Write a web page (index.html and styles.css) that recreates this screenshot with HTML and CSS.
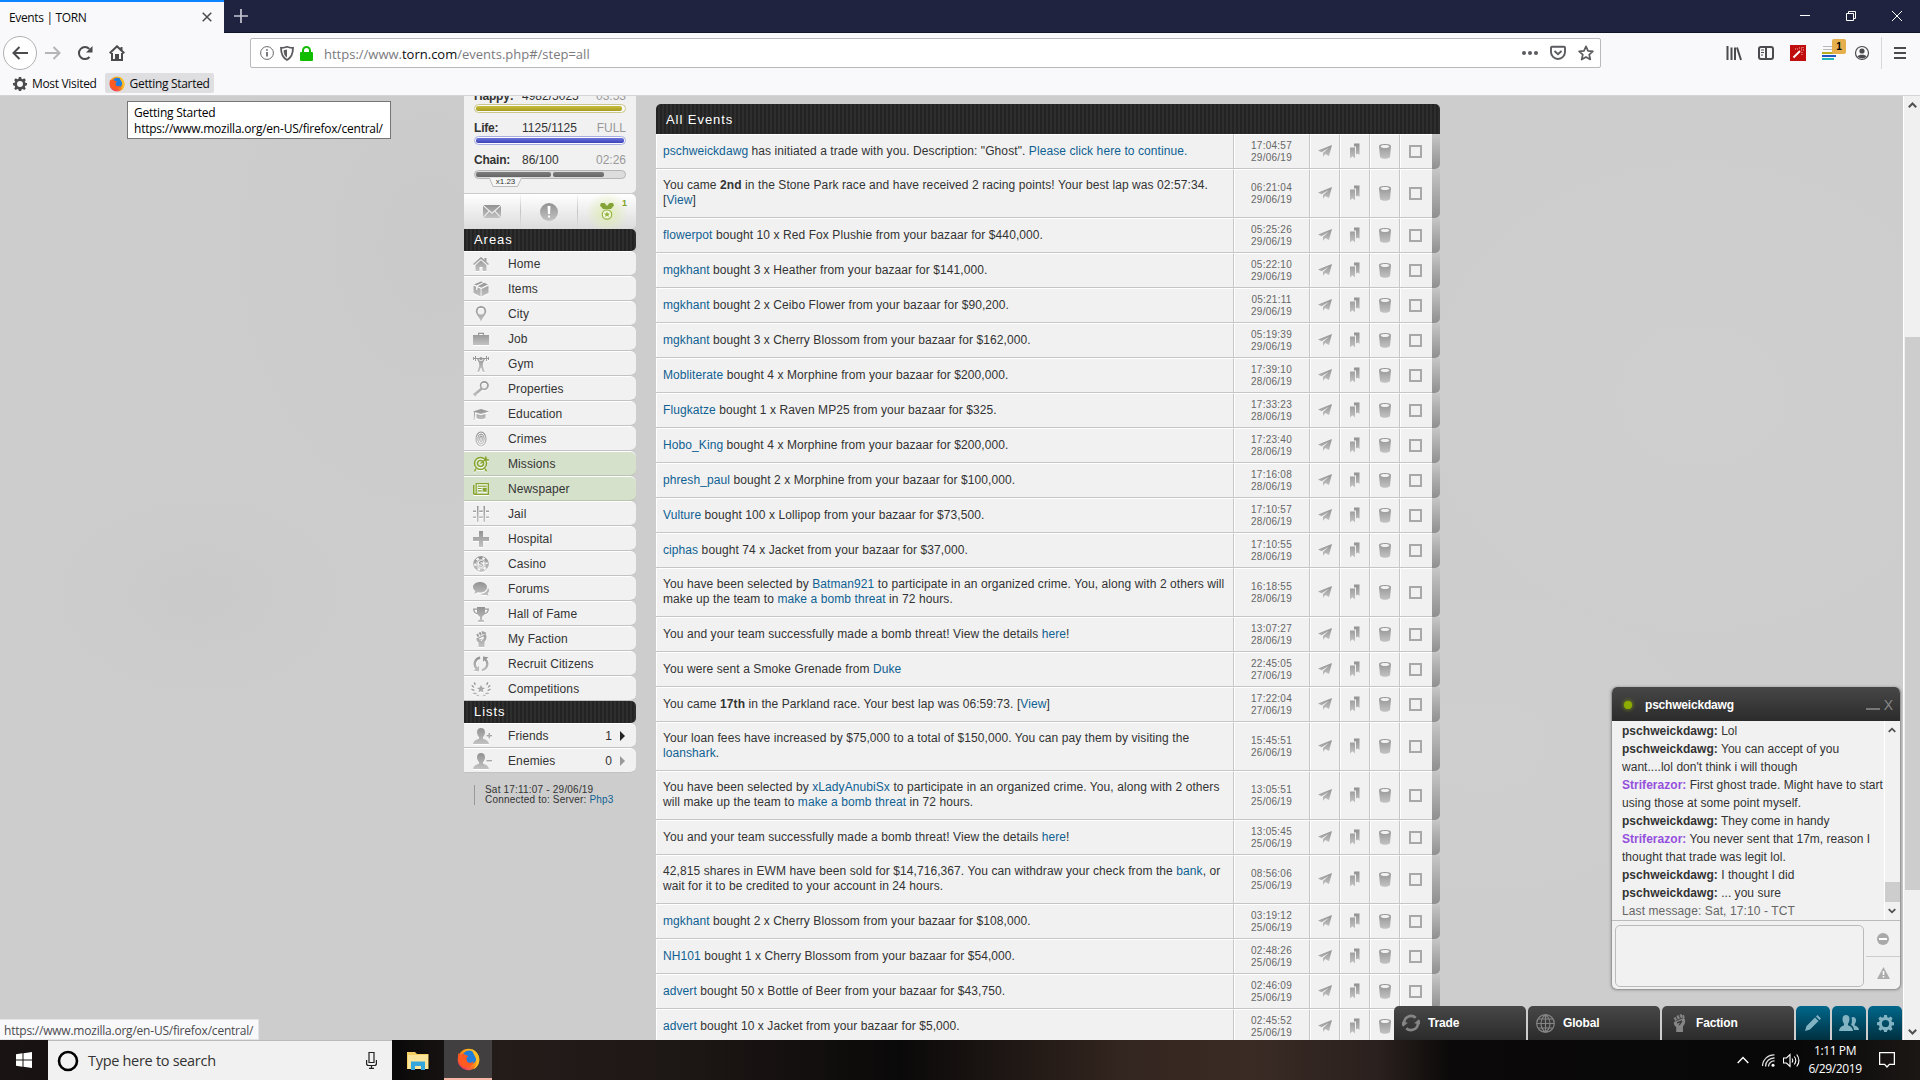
FILE: index.html
```
<!DOCTYPE html>
<html lang="en">
<head>
    <meta charset="UTF-8">
    <title>Events | TORN</title>
    <link rel="stylesheet" href="styles.css">
</head>
<body>
<svg class="defs" width="0" height="0">
    <defs>
        <linearGradient id="gray" x1="0" y1="0" x2="0" y2="1"><stop offset="0" stop-color="#929292"/><stop offset="1" stop-color="#c3c3c3"/></linearGradient>
        <linearGradient id="fox" x1="1" y1="0" x2="0" y2="1"><stop offset="0" stop-color="#ffe226"/><stop offset=".5" stop-color="#ff8a16"/><stop offset="1" stop-color="#e31587"/></linearGradient>
    </defs>
    <symbol id="i-home" viewBox="0 0 16 16"><path d="M8 1L0 8l1 1.200L8 3l7 6.200L16 8l-2.500-2.200V2h-2v2zM8 4.300L2.500 9.200V15h4v-4h3v4h4V9.200z"/></symbol>
    <symbol id="i-items" viewBox="0 0 16 16"><path d="M8 .5L10 1.300 3.500 4.600 1 3.600zM11.200 1.800L15 3.400 8.300 6.800 4.700 5.200zM.5 4.700L3 5.700v3l1.500.6V6.400L7.600 7.700v7.800L.5 12zM15.500 4.700V12l-7 3.500V7.900z"/></symbol>
    <symbol id="i-city" viewBox="0 0 16 16"><path fill-rule="evenodd" d="M8 0a5.200 5.200 0 0 0-5.200 5.200C2.800 9 6.500 11 8 16c1.500-5 5.200-7 5.200-10.800A5.200 5.200 0 0 0 8 0zm0 1.800a3.400 3.400 0 1 1 0 6.800 3.400 3.400 0 0 1 0-6.800z"/></symbol>
    <symbol id="i-job" viewBox="0 0 16 16"><path fill-rule="evenodd" d="M5 4V1.800h6V4h5v10H0V4zm1.200 0h3.600V2.900H6.200z"/></symbol>
    <symbol id="i-gym" viewBox="0 0 16 16"><path d="M0 1h1v1h1V0h1v5H2V3H1v1H0zM13 0h1v2h1V1h1v3h-1V3h-1v2h-1zM3 2h3.500v1H3zM9.500 2H13v1H9.500zM8 1a1.700 1.700 0 1 1 0 3.400A1.700 1.700 0 0 1 8 1zM4 3h1.500L6.800 5h2.400l1.300-2H12l-2 4-.3 3 2 6h-1.800L8 11l-1.900 5H4.300l2-6L6 7z"/></symbol>
    <symbol id="i-properties" viewBox="0 0 16 16"><path fill-rule="evenodd" d="M11.200 0a4.600 4.600 0 1 1-1.800 8.800L3.500 14l-.3 1.500H1.500v-1.300l-1 .2L0 13l7.500-6A4.600 4.600 0 0 1 11.200 0zm0 1.800a2.800 2.800 0 1 0 0 5.600 2.800 2.800 0 0 0 0-5.600z"/></symbol>
    <symbol id="i-education" viewBox="0 0 16 16"><path d="M8 3l8 2.500L8 8 2 6.300v3L1.500 14H.5L1 9V6L0 5.500zM3.500 8L8 9.300 12.500 8v4c-2 1.700-7 1.700-9 0z"/></symbol>
    <symbol id="i-crimes" viewBox="0 0 16 16"><g fill="none" stroke="url(#gray)" stroke-width="1.200"><ellipse cx="8" cy="8" rx="5" ry="7"/><ellipse cx="8" cy="8" rx="3.100" ry="4.900"/><ellipse cx="8" cy="8" rx="1.200" ry="2.800"/></g></symbol>
    <symbol id="i-missions" viewBox="0 0 16 16"><g fill="none" stroke="#85a52e" stroke-width="1.500"><circle cx="7.500" cy="7.500" r="6"/><circle cx="7.500" cy="7.500" r="3"/><path d="M7.500 7.500L14 2.500M12 4l1-3.500M13 4h3M3 12.500L1.500 15.500M12 12.500l1.500 3"/></g></symbol>
    <symbol id="i-newspaper" viewBox="0 0 16 16"><path fill="#85a52e" fill-rule="evenodd" d="M2.500 2H16v12H1.500A1.500 1.500 0 0 1 0 12.500V4h1.500v8.500h1zm1.300 1.300v9.400h10.900V3.300zM5 4.700h8.700v1.100H5zm0 2.300h3.500v1.100H5zm0 2.300h3.500v1.100H5zm4.700-2.500h4v4h-4z"/></symbol>
    <symbol id="i-jail" viewBox="0 0 16 16"><path d="M4 0h1.500v16H4zM10.500 0H12v16h-1.500zM0 4.500h3v1.500H0zM6.200 4.500h3.600v1.500H6.200zM13 4.500h3v1.500h-3zM0 10.500h3v1.500H0zM6.200 10.500h3.600v1.500H6.200zM13 10.500h3v1.500h-3z"/></symbol>
    <symbol id="i-hospital" viewBox="0 0 16 16"><path d="M6 0h4v6h6v4h-6v6H6v-6H0V6h6z"/></symbol>
    <symbol id="i-casino" viewBox="0 0 16 16"><g fill="none" stroke="url(#gray)"><circle cx="8" cy="8" r="7.400" stroke-width=".9"/><circle cx="8" cy="8" r="6.200" stroke-width="2.600" stroke-dasharray="4 2.490"/><circle cx="8" cy="8" r="4.200" stroke-width=".8"/><path stroke-width="1.400" d="M10 6.300C8.500 5 6 6 6.700 7.300s3 .5 2.800 2S7 10.800 5.800 9.600"/></g></symbol>
    <symbol id="i-forums" viewBox="0 0 16 16"><path d="M7 1c4 0 7 2.200 7 5.200s-3 5.300-7 5.300c-.8 0-1.600-.1-2.300-.3L1.500 13l.7-3C.8 9 0 7.700 0 6.200 0 3.200 3 1 7 1zM15 7c1.500 2 1.200 4-.3 5.300l.8 2.700-2.800-1.300c-2 .6-3.900.3-5.200-.7C11.500 12.800 14.500 10.500 15 7z"/></symbol>
    <symbol id="i-hof" viewBox="0 0 16 16"><path fill-rule="evenodd" d="M4 1h8v1.500h4c0 3.500-1.700 5.500-4.500 6L9 11v2.500l2 1V16H5v-1.500l2-1V11L4.500 8.500C1.700 8 0 6 0 2.500h4zM1.500 3.700c.2 1.600 1 2.700 2.500 3.200V3.700zm10.500 0v3.200c1.500-.5 2.300-1.600 2.500-3.200z"/></symbol>
    <symbol id="i-faction" viewBox="0 0 16 16"><path d="M3.200 3.600L5 2.600l1.300 2.700-1.700 1zM5.700 1.700l1.900-.8 1.200 3L7 4.800zM8.500.7L10.300 0l1 3-1.700.7zM11 .9l1.400 0 .7 2.700-1.500.4zM3.500 7.200l8-3.400c1.300 0 2 .7 2 2.200 0 2-.5 3.500-2 5V16h-6v-4.500C4 10.500 3.200 9 3.500 7.200zM6 7.400l.5 1 2.500-.7-1.500 2.300h1.200L11 6.700 10.500 5.600z"/></symbol>
    <symbol id="i-recruit" viewBox="0 0 16 16"><path d="M7 .6L7.300 3A5 5 0 0 0 4.300 11.400L6 10v5.500L.5 14.800l2-1.700A7.500 7.500 0 0 1 7 .6zM9 15.400L8.700 13a5 5 0 0 0 3-8.400L10 6V.5l5.500.7-2 1.700A7.500 7.500 0 0 1 9 15.400z"/></symbol>
    <symbol id="i-competitions" viewBox="0 0 20 16"><path d="M10 4l1.200 2.600 2.800.3-2.100 1.900.6 2.800-2.500-1.400-2.500 1.400.6-2.800L6 6.900l2.800-.3zM3 1c2 1 2 2.500 1.200 3.500C3 3.500 2.500 2.500 3 1zM.5 4c2 .2 3 1.500 2.700 3C1.500 6.600.4 5.500.5 4zM0 8c2-.5 3.500.5 3.700 2C2 10.500.6 9.700 0 8zM1.500 12.300c1.500-1.300 3.500-1 4.500.4-1.500 1.200-3.300 1-4.500-.4zM5 14c1.500-.7 3 0 3.500 1-1.500.8-3 .4-3.500-1zM17 1c-2 1-2 2.500-1.200 3.500C17 3.500 17.500 2.500 17 1zM19.500 4c-2 .2-3 1.500-2.700 3 1.700-.4 2.800-1.500 2.700-3zM20 8c-2-.5-3.500.5-3.700 2 1.700.5 3.100-.3 3.700-2zM18.500 12.300c-1.500-1.300-3.500-1-4.500.4 1.500 1.200 3.300 1 4.500-.4zM15 14c-1.500-.7-3 0-3.500 1 1.500.8 3 .4 3.500-1z"/></symbol>
    <symbol id="i-friends" viewBox="0 0 19 16"><path d="M8 0c2.500 0 4 1.600 4 4.200S10.700 8.500 10 9.300v1.400c2 1 5.500 1.300 6 5.300H0c.5-4 4-4.300 6-5.300V9.300C5.300 8.500 4 6.800 4 4.200S5.500 0 8 0zM15.500 5H17v2h2v1.500h-2v2h-1.500v-2h-2V7h2z"/></symbol>
    <symbol id="i-enemies" viewBox="0 0 19 16"><path d="M8 0c2.500 0 4 1.600 4 4.200S10.700 8.500 10 9.300v1.400c2 1 5.500 1.300 6 5.300H0c.5-4 4-4.300 6-5.300V9.300C5.300 8.500 4 6.800 4 4.200S5.500 0 8 0zM13.500 7H19v1.500h-5.500z"/></symbol>
    <symbol id="i-send" viewBox="0 0 14 12"><path d="M14 0L0 5.500l3.600 1.700L11 2.700 5 8v4l2.200-2.900L11 11z"/></symbol>
    <symbol id="i-save" viewBox="0 0 10 16"><path d="M0 4.500h5V15.500l-2.500-2.300L0 15.500zM4 .5h5.500v11.500L8 10.500 6 11.500V3.500H4z"/></symbol>
    <symbol id="i-trash" viewBox="0 0 12 15"><path fill-rule="evenodd" d="M6 0c3.500 0 6 .9 6 2.200L11 13c-1 2.400-9 2.400-10 0L0 2.200C0 .9 2.500 0 6 0zm0 1C3.500 1 1.500 1.600 1.500 2.400S3.500 3.900 6 3.900s4.500-.7 4.500-1.500S8.500 1 6 1z"/></symbol>
    <symbol id="i-gear" viewBox="0 0 16 16"><path fill-rule="evenodd" d="M6.700 0h2.600l.4 2.100 1.400.6 1.800-1.200 1.800 1.800-1.200 1.800.6 1.400 2.100.4v2.600l-2.100.4-.6 1.400 1.200 1.800-1.800 1.800-1.800-1.200-1.400.6L9.300 16H6.700l-.4-1.700-1.400-.6-1.800 1.200-1.800-1.800 1.200-1.800-.6-1.400L0 9.500V6.900l1.900-.4.6-1.400-1.200-1.800 1.800-1.800 1.800 1.200 1.400-.6zM8 4.600a3.400 3.400 0 1 0 0 6.800 3.400 3.400 0 0 0 0-6.800z"/></symbol>
    <symbol id="i-firefox" viewBox="0 0 16 16"><circle cx="8" cy="8" r="7.500" fill="url(#fox)"/><circle cx="8.500" cy="6.800" r="5" fill="#1f7ddb"/><path fill="#ff5a1f" d="M1 3.500L2.500 4.800 4 3.800 6.500 5l1.500.5L6.500 7l.5 2.500c1.500 1.500 3.500.5 4.500-.3-.5 3-3 4.500-5.800 4.200C2 13.500 0 9 1 3.500z"/><path fill="#ffbd27" d="M10.500.8c3 1.500 5 4.200 5 7.400s-2 5.800-4 6.600c2.300-3 2.300-5.300 1.500-7.800-.5-2-2-3-2.500-6.200z"/></symbol>
</svg>

<div class="titlebar">
    <div class="tab">
        <span>Events | TORN</span>
        <svg width="10" height="10" viewBox="0 0 10 10"><path d="M.7.700l8.600 8.600M9.300.700L.7 9.300" stroke="#4a4a4f" stroke-width="1.500"/></svg>
    </div>
    <svg class="new-tab" width="14" height="14" viewBox="0 0 14 14"><path d="M7 0v14M0 7h14" stroke="#c6c7d2" stroke-width="1.700"/></svg>
    <div class="window-buttons">
        <svg width="10" height="10" viewBox="0 0 10 10"><path d="M0 4.500h10" stroke="#fff"/></svg>
        <svg width="10" height="10" viewBox="0 0 10 10"><path d="M.5 2.500h7v7h-7zM2.500 2.500v-2h7v7h-2" fill="none" stroke="#fff"/></svg>
        <svg width="10" height="10" viewBox="0 0 10 10"><path d="M0 0l10 10M10 0L0 10" stroke="#fff"/></svg>
    </div>
</div>

<div class="toolbar">
    <div class="tool back"><svg width="16" height="14" viewBox="0 0 16 14"><path d="M16 7H1.500M7.500 1l-6 6 6 6"/></svg></div>
    <div class="tool forward"><svg width="16" height="14" viewBox="0 0 16 14"><path d="M0 7h14.500M8.500 1l6 6-6 6"/></svg></div>
    <div class="tool"><svg width="16" height="16" viewBox="0 0 16 16"><path d="M12.500 12A6 6 0 1 1 12.300 3.900"/><path class="solid" d="M15.500 1v6.500H9z"/></svg></div>
    <div class="tool"><svg width="16" height="16" viewBox="0 0 16 16"><path d="M.7 8.300L8 1.300l7.300 7M3 8v7h10V8M12.500 2v3"/><path class="solid" d="M6 9h4v6H6z"/></svg></div>
    <div class="urlbar">
        <svg width="14" height="14" viewBox="0 0 14 14"><circle cx="7" cy="7" r="6.400" fill="none" stroke="#6b6b70"/><path d="M7 6v4.500M7 3.200v1.600" stroke="#5b5b60" stroke-width="1.600"/></svg>
        <svg width="14" height="15" viewBox="0 0 14 15"><path d="M1 1.800Q4.500 2 7 .8q2.500 1.200 6 1c0 6-1.200 9.700-6 12.200C2.200 11.500 1 7.800 1 1.800z" fill="none" stroke="#5b5b60" stroke-width="1.800"/><path d="M7 3.500v8C4.500 10 3.700 8 3.600 4.300z" fill="#5b5b60"/></svg>
        <svg width="13" height="15" viewBox="0 0 13 15"><rect x="0" y="6" width="13" height="9" rx="1" fill="#12bc00"/><path d="M3 7V4.500a3.500 3.500 0 0 1 7 0V7" fill="none" stroke="#12bc00" stroke-width="2"/></svg>
        <span class="url">https://www.<b>torn.com</b>/events.php#/step=all</span>
        <svg class="url-right" width="16" height="16" viewBox="0 0 16 16"><g fill="#5b5b60"><circle cx="2" cy="8" r="2"/><circle cx="8" cy="8" r="2"/><circle cx="14" cy="8" r="2"/></g></svg>
        <svg width="16" height="16" viewBox="0 0 16 16"><path d="M2 1.800h12q1 0 1 1V7A7 7 0 0 1 1 7V2.800q0-1 1-1zM4.500 6L8 9.300 11.500 6" fill="none" stroke="#5b5b60" stroke-width="1.900"/></svg>
        <svg width="16" height="16" viewBox="0 0 16 16"><path d="M8 1.300l2 4.500 4.900.5-3.700 3.300 1.100 4.900L8 12l-4.300 2.500 1.100-4.900L1.100 6.300 6 5.800z" fill="none" stroke="#5b5b60" stroke-width="1.700" stroke-linejoin="round"/></svg>
    </div>
    <div class="tool library"><svg width="16" height="16" viewBox="0 0 16 16"><path d="M1.500 1v14M5.500 2.500V15M9 2.500V15M11 2.500L15 15"/></svg></div>
    <div class="tool"><svg width="16" height="16" viewBox="0 0 16 16"><rect x="1" y="2" width="14" height="12" rx="2"/><path d="M8 2v12"/><path d="M3 5h3M3 7.500h3M3 10h2" stroke-width="1"/></svg></div>
    <div class="tool"><svg width="16" height="16" viewBox="0 0 16 16"><path fill="#c00d0d" stroke="none" d="M0 0h16v16H0z"/><path stroke="#fff" d="M3.500 12.500L10 6"/><path stroke="#f3b8b8" stroke-width="1" stroke-dasharray="1 1" d="M5 4h3M9 3h4M11 5h3M12 7v3M13 2v2"/></svg></div>
    <div class="tool addon"><svg width="16" height="16" viewBox="0 0 16 16"><path stroke="#b9b9b9" stroke-width="1" d="M1 1.500h12M1 4.500h12"/><path stroke="#b9ac1e" d="M0 8h12"/><path stroke="#2456c4" d="M0 11h14"/><path stroke="#22b6b6" d="M0 14h12"/></svg><span class="badge">1</span></div>
    <div class="tool"><svg width="16" height="16" viewBox="0 0 16 16"><circle cx="8" cy="8" r="6.500" stroke-width="1.200"/><circle class="solid" cx="8" cy="6" r="2.600"/><path class="solid" d="M3.500 11.500c1-2.500 8-2.500 9 0-2.500 2.500-6.500 2.500-9 0z"/></svg></div>
    <div class="tool menu"><svg width="12" height="14" viewBox="0 0 12 14"><path d="M0 2h12M0 7h12M0 12h12"/></svg></div>
</div>
<div class="bookmarks">
    <span class="bookmark"><svg width="14" height="14" fill="#4a4a4f"><use href="#i-gear"/></svg>Most Visited</span>
    <span class="bookmark active"><svg width="16" height="16"><use href="#i-firefox"/></svg>Getting Started</span>
</div>

<div class="viewport">
    <div class="content">
        <div class="sidebar">
            <div class="bars">
                <div class="bar-text"><b>Happy:</b><span>4982/5025</span><i>03:53</i></div>
                <div class="bar happy"><div></div></div>
                <div class="bar-text"><b>Life:</b><span>1125/1125</span><i>FULL</i></div>
                <div class="bar life"><div></div></div>
                <div class="bar-text"><b>Chain:</b><span>86/100</span><i>02:26</i></div>
                <div class="bar chain"><div></div><div></div></div>
                <div class="bonus">
                    <svg width="33" height="10" viewBox="0 0 33 10"><path d="M.5 0l3.500 8.500h24.500L32.500 0" fill="#f6f6f6" stroke="#bbb"/></svg>
                    <span>x1.23</span>
                </div>
            </div>
            <div class="notices">
                <div><svg width="18" height="13" viewBox="0 0 18 13" fill="url(#gray)"><path d="M.5 0h17L9 7.500zM0 1l5.500 5L0 12zM18 1l-5.500 5 5.500 6zM6.300 6.800L9 9l2.700-2.200L17.500 13H.5z"/></svg></div>
                <div><svg width="18" height="18" viewBox="0 0 18 18"><circle cx="9" cy="9" r="9" fill="url(#gray)"/><path d="M7.500 3h3L10 11H8zM8 12.500h2v2H8z" fill="#fff"/></svg></div>
                <div class="award"><svg width="14" height="17" viewBox="0 0 14 17"><path d="M1 0h3.500L7 3 9.500 0H13l1 2.500-3 3.500H3L0 2.500z" fill="#84a337"/><circle cx="7" cy="11.500" r="4.700" fill="#f2f6df" stroke="#96b548" stroke-width="1.200"/><path d="M7 8.500l.9 2h2.100l-1.600 1.400.6 2.100-2-1.200-2 1.200.6-2.100L4 10.500h2.100z" fill="#94b440"/></svg><span>1</span></div>
            </div>
            <h2 class="dark-title">Areas</h2>
            <ul id="areas"></ul>
            <h2 class="dark-title">Lists</h2>
            <ul>
                <li><svg width="19" height="16"><use href="#i-friends"/></svg><span>Friends</span><em>1</em><u class="arrow"></u></li>
                <li><svg width="19" height="16"><use href="#i-enemies"/></svg><span>Enemies</span><em>0</em><u class="arrow dim"></u></li>
            </ul>
            <div class="server">Sat 17:11:07 - 29/06/19<br>Connected to: Server: <a>Php3</a></div>
        </div>
        <div class="events">
            <h2 class="dark-title">All Events</h2>
            <div id="events"></div>
        </div>
    </div>
    <div class="scrollbar">
        <svg width="9" height="6" viewBox="0 0 9 6"><path d="M.8 5.200l3.700-3.700 3.700 3.700" fill="none" stroke="#505050" stroke-width="2"/></svg>
        <div class="thumb"></div>
        <svg width="9" height="6" viewBox="0 0 9 6"><path d="M.8.800l3.700 3.700L8.200.800" fill="none" stroke="#505050" stroke-width="2"/></svg>
    </div>

    <div class="chat-box">
        <div class="chat-head"><i></i><span>pschweickdawg</span><u></u><s>X</s></div>
        <div class="chat-body">
            <div class="messages">
                <p><b>pschweickdawg:</b> Lol</p>
                <p><b>pschweickdawg:</b> You can accept of you<br>want....lol don't think i will though</p>
                <p><b class="me">Striferazor:</b> First ghost trade. Might have to start<br>using those at some point myself.</p>
                <p><b>pschweickdawg:</b> They come in handy</p>
                <p><b class="me">Striferazor:</b> You never sent that 17m, reason I<br>thought that trade was legit lol.</p>
                <p><b>pschweickdawg:</b> I thought I did</p>
                <p><b>pschweickdawg:</b> ... you sure</p>
                <p class="last">Last message: Sat, 17:10 - TCT</p>
            </div>
            <div class="chat-scroll">
                <svg width="8" height="6" viewBox="0 0 9 6"><path d="M.8 5.200l3.700-3.700 3.700 3.700" fill="none" stroke="#505050" stroke-width="2"/></svg>
                <div></div>
                <svg width="8" height="6" viewBox="0 0 9 6"><path d="M.8.800l3.700 3.700L8.200.800" fill="none" stroke="#505050" stroke-width="2"/></svg>
            </div>
        </div>
        <div class="chat-foot">
            <div class="chat-input"></div>
            <div class="chat-side">
                <div><svg width="12" height="12" viewBox="0 0 12 12"><circle cx="6" cy="6" r="6" fill="#a9a9a9"/><path d="M2 5h8v2H2z" fill="#fff"/></svg></div>
                <div><svg width="13" height="12" viewBox="0 0 13 12"><path d="M6.500 0L13 12H0z" fill="#adadad"/><path d="M5.700 4h1.600v4H5.700zM5.700 9h1.600v1.500H5.700z" fill="#fff"/></svg></div>
            </div>
        </div>
    </div>
    <div class="chat-tabs">
        <div class="chat-tab"><svg width="18" height="18" viewBox="0 0 16 16"><use href="#i-recruit" transform="rotate(50 8 8)"/></svg>Trade</div>
        <div class="chat-tab"><svg width="19" height="19" viewBox="0 0 19 19"><path d="M9.500.7a8.800 8.800 0 1 0 0 17.600 8.800 8.800 0 0 0 0-17.600zM9.500.7v17.600M.7 9.500h17.600M2 5h15M2 14h15M9.500.7c-6 4.500-6 13 0 17.600M9.500.7c6 4.500 6 13 0 17.600" fill="none" stroke="#858585" stroke-width="1.200"/></svg>Global</div>
        <div class="chat-tab"><svg width="18" height="20"><use href="#i-faction"/></svg>Faction</div>
        <div class="chat-tool"><svg width="16" height="16" viewBox="0 0 16 16"><path d="M11 1.500L12.500 0 16 3.500 14.500 5zM10 2.500L13.500 6 5 14.500 0 16l1.500-5z"/></svg></div>
        <div class="chat-tool"><svg width="20" height="16" viewBox="0 0 20 16"><path d="M7 0c2.300 0 3.500 1.600 3.500 4S9.500 8 9 8.700v1.500c1.500 1 4.500 1.300 5 5.800H0c.5-4.500 3.500-4.800 5-5.800V8.700C4.500 8 3.500 6.400 3.500 4S4.700 0 7 0zM14 2c2 0 3 1.400 3 3.300S16.200 8.500 15.700 9v1.500c1.500.7 3.900 1 4.300 4.500h-5c-.3-2.600-1.200-3.900-3-4.900.8-1.500 1.300-4.500.5-7.600.4-.3.900-.5 1.500-.5z"/></svg></div>
        <div class="chat-tool"><svg width="17" height="17"><use href="#i-gear"/></svg></div>
    </div>
    <div class="status">https://www.mozilla.org/en-US/firefox/central/</div>
    <div class="tooltip">Getting Started<br>https://www.mozilla.org/en-US/firefox/central/</div>
</div>

<div class="taskbar">
    <div class="start"><svg width="16" height="16" viewBox="0 0 16 16"><path d="M0 2.200L6.500 1.300v6.200H0zM7.500 1.200L16 0v7.500H7.500zM0 8.500h6.500v6.200L0 13.800zM7.500 8.500H16V16l-8.500-1.200z" fill="#fff"/></svg></div>
    <div class="search">
        <svg width="22" height="22" viewBox="0 0 22 22"><circle cx="11" cy="11" r="9" fill="none" stroke="#000" stroke-width="2.600"/></svg>
        <span>Type here to search</span>
        <svg width="11" height="17" viewBox="0 0 11 17"><path d="M3 .5h5v10H3zM.6 8v3.500q0 2 2 2h5.800q2 0 2-2V8M5.500 13.500v3M3 16.400h5" fill="none" stroke="#222" stroke-width="1.200"/></svg>
    </div>
    <div class="app"><svg width="22" height="19" viewBox="0 0 22 19"><path d="M0 1h8l2 2h11.500v15H0z" fill="#f6cf62"/><path d="M1 4h20v14H1z" fill="#fbe59a"/><path d="M4 19v-8.500h14V19h-4v-4H8v4z" fill="#35a7dd"/></svg></div>
    <div class="app running"><svg width="23" height="23"><use href="#i-firefox"/></svg></div>
    <div class="tray">
        <svg width="12" height="8" viewBox="0 0 12 8"><path d="M.7 7L6 1.500 11.300 7" fill="none" stroke="#fff" stroke-width="1.400"/></svg>
        <svg class="wifi" width="13" height="13" viewBox="0 0 13 13"><path d="M.5 12A11.500 11.500 0 0 1 12.500.8M3.500 12.500a8.500 8.500 0 0 1 9-8.500M6.500 12.500a5.500 5.500 0 0 1 6-5.500" fill="none" stroke="#ddd" stroke-width="1.300"/><circle cx="11" cy="11.300" r="1.500" fill="#fff"/></svg>
        <svg class="sound" width="17" height="15" viewBox="0 0 17 15"><path d="M.5 5h3L7 1.500v12L3.500 10h-3zM9 5.500q1.500 2 0 4M11.300 3.500q3 4 0 8M13.700 1.500q4.500 6 0 12" fill="none" stroke="#fff" stroke-width="1.100"/></svg>
        <div class="clock">1:11 PM<br>6/29/2019</div>
        <svg width="16" height="16" viewBox="0 0 16 16"><path d="M.6.700h14.800v11.600h-5L8 15l-2.400-2.700h-5z" fill="none" stroke="#fff" stroke-width="1.300"/></svg>
    </div>
</div>

<script>
    const areas = [
        ['home', 'Home'],
        ['items', 'Items'],
        ['city', 'City'],
        ['job', 'Job'],
        ['gym', 'Gym'],
        ['properties', 'Properties'],
        ['education', 'Education'],
        ['crimes', 'Crimes'],
        ['missions', 'Missions', 'highlight'],
        ['newspaper', 'Newspaper', 'highlight'],
        ['jail', 'Jail'],
        ['hospital', 'Hospital'],
        ['casino', 'Casino'],
        ['forums', 'Forums'],
        ['hof', 'Hall of Fame'],
        ['faction', 'My Faction'],
        ['recruit', 'Recruit Citizens'],
        ['competitions', 'Competitions'],
    ];

    const events = [
        ['<a>pschweickdawg</a> has initiated a trade with you. Description: "Ghost". <a>Please click here to continue.</a>', '17:04:57', '29/06/19'],
        ['You came <b>2nd</b> in the Stone Park race and have received 2 racing points! Your best lap was 02:57:34.<br>[<a>View</a>]', '06:21:04', '29/06/19'],
        ['<a>flowerpot</a> bought 10 x Red Fox Plushie from your bazaar for $440,000.', '05:25:26', '29/06/19'],
        ['<a>mgkhant</a> bought 3 x Heather from your bazaar for $141,000.', '05:22:10', '29/06/19'],
        ['<a>mgkhant</a> bought 2 x Ceibo Flower from your bazaar for $90,200.', '05:21:11', '29/06/19'],
        ['<a>mgkhant</a> bought 3 x Cherry Blossom from your bazaar for $162,000.', '05:19:39', '29/06/19'],
        ['<a>Mobliterate</a> bought 4 x Morphine from your bazaar for $200,000.', '17:39:10', '28/06/19'],
        ['<a>Flugkatze</a> bought 1 x Raven MP25 from your bazaar for $325.', '17:33:23', '28/06/19'],
        ['<a>Hobo_King</a> bought 4 x Morphine from your bazaar for $200,000.', '17:23:40', '28/06/19'],
        ['<a>phresh_paul</a> bought 2 x Morphine from your bazaar for $100,000.', '17:16:08', '28/06/19'],
        ['<a>Vulture</a> bought 100 x Lollipop from your bazaar for $73,500.', '17:10:57', '28/06/19'],
        ['<a>ciphas</a> bought 74 x Jacket from your bazaar for $37,000.', '17:10:55', '28/06/19'],
        ['You have been selected by <a>Batman921</a> to participate in an organized crime. You, along with 2 others will<br>make up the team to <a>make a bomb threat</a> in 72 hours.', '16:18:55', '28/06/19'],
        ['You and your team successfully made a bomb threat! View the details <a>here</a>!', '13:07:27', '28/06/19'],
        ['You were sent a Smoke Grenade from <a>Duke</a>', '22:45:05', '27/06/19'],
        ['You came <b>17th</b> in the Parkland race. Your best lap was 06:59:73. [<a>View</a>]', '17:22:04', '27/06/19'],
        ['Your loan fees have increased by $75,000 to a total of $150,000. You can pay them by visiting the<br><a>loanshark</a>.', '15:45:51', '26/06/19'],
        ['You have been selected by <a>xLadyAnubiSx</a> to participate in an organized crime. You, along with 2 others<br>will make up the team to <a>make a bomb threat</a> in 72 hours.', '13:05:51', '25/06/19'],
        ['You and your team successfully made a bomb threat! View the details <a>here</a>!', '13:05:45', '25/06/19'],
        ['42,815 shares in EWM have been sold for $14,716,367. You can withdraw your check from the <a>bank</a>, or<br>wait for it to be credited to your account in 24 hours.', '08:56:06', '25/06/19'],
        ['<a>mgkhant</a> bought 2 x Cherry Blossom from your bazaar for $108,000.', '03:19:12', '25/06/19'],
        ['<a>NH101</a> bought 1 x Cherry Blossom from your bazaar for $54,000.', '02:48:26', '25/06/19'],
        ['<a>advert</a> bought 50 x Bottle of Beer from your bazaar for $43,750.', '02:46:09', '25/06/19'],
        ['<a>advert</a> bought 10 x Jacket from your bazaar for $5,000.', '02:45:52', '25/06/19'],
    ];

    function icon(name, width, height)
    {
        return `<svg width="${width}" height="${height}"><use href="#i-${name}"/></svg>`;
    }

    document.querySelector('#areas').innerHTML = areas.map(([name, label, className]) =>
        `<li class="${className || ''} ${name}">${icon(name, name === 'competitions' ? 20 : 16, 16)}<span>${label}</span></li>`
    ).join('');

    document.querySelector('#events').innerHTML = events.map(([text, time, date]) => `
        <div class="event">
            <div class="text"><p>${text}</p></div>
            <div class="time">${time}<br>${date}</div>
            <div class="action">${icon('send', 14, 12)}</div>
            <div class="action">${icon('save', 10, 16)}</div>
            <div class="action">${icon('trash', 12, 15)}</div>
            <div class="check"><i></i></div>
            <div class="tail"></div>
        </div>`
    ).join('');
</script>
</body>
</html>
```
FILE: styles.css
```
* {
    box-sizing: border-box;
}

body {
    margin: 0;
    height: 1080px;
    overflow: hidden;
    display: flex;
    flex-direction: column;
    font-family: "Liberation Sans", Arial, sans-serif;
    font-size: 12px;
    color: #333;
}

svg {
    flex: none;
    display: block;
}

.defs {
    position: absolute;
}

h2, p, ul {
    margin: 0;
    padding: 0;
}

a {
    color: #0f6193;
}

/* browser window */

.titlebar, .toolbar, .bookmarks, .status, .tooltip, .taskbar {
    font-family: "Open Sans", "Noto Sans", sans-serif;
}

.titlebar {
    height: 33px;
    flex: none;
    display: flex;
    align-items: center;
    background: #20233f;
    border-bottom: 1px solid #12142b;
}

.tab {
    width: 224px;
    height: 33px;
    padding: 0 12px 0 9px;
    display: flex;
    align-items: center;
    justify-content: space-between;
    border-top: 2px solid #0a84ff;
    background: #f9f9fb;
    color: #0c0c0d;
    letter-spacing: -0.35px;
}

.new-tab {
    margin-left: 10px;
}

.window-buttons {
    margin-left: auto;
    margin-right: 18px;
    display: flex;
    gap: 36px;
}

.toolbar {
    height: 40px;
    flex: none;
    display: flex;
    align-items: center;
    padding: 0 3px 0 4px;
    background: #f9f9fb;
}

.tool {
    width: 32px;
    height: 32px;
    display: flex;
    align-items: center;
    justify-content: center;
}

.tool svg {
    fill: none;
    stroke: #4a4a4f;
    stroke-width: 2;
}

.tool .solid {
    fill: #4a4a4f;
    stroke: none;
}

.back {
    width: 34px;
    height: 34px;
    margin-left: -1px;
    border: 1px solid #b1b1b3;
    border-radius: 50%;
    background: #fff;
}

.forward svg {
    stroke: #b5b5b8;
}

.urlbar {
    width: 1351px;
    height: 30px;
    margin-left: 117px;
    padding: 0 6px 0 9px;
    display: flex;
    align-items: center;
    gap: 6px;
    border: 1px solid #b9b9bc;
    border-radius: 2px;
    background: #fff;
}

.url {
    margin: 1px 0 0 5px;
    font-size: 13px;
    color: #7a7a7d;
}

.url b {
    font-weight: normal;
    color: #0c0c0d;
}

.url-right {
    margin-left: auto;
}

.url-right, .url-right + svg {
    margin-right: 6px;
}

.library {
    margin-left: auto;
}

.addon {
    position: relative;
}

.badge {
    position: absolute;
    left: 18px;
    top: 2px;
    width: 14px;
    height: 15px;
    border-radius: 2px;
    background: #e5b04c;
    color: #000;
    font: bold 10px/15px "Liberation Sans", sans-serif;
    text-align: center;
}

.menu {
    width: 36px;
    margin-left: 3px;
    border-left: 1px solid #d7d7db;
}

.bookmarks {
    height: 23px;
    flex: none;
    display: flex;
    align-items: center;
    gap: 4px;
    padding: 0 0 2px 9px;
    border-bottom: 1px solid #d4d4d6;
    background: #f9f9fb;
    color: #0c0c0d;
    letter-spacing: -0.32px;
}

.bookmark {
    height: 20px;
    display: flex;
    align-items: center;
    gap: 5px;
    padding: 1px 4px 0;
}

.bookmark.active {
    background: #dfdfe1;
    border-radius: 2px;
}

/* page */

.viewport {
    position: relative;
    height: 944px;
    flex: none;
    display: flex;
    background: #cdcdcd;
    overflow: hidden;
}

.content {
    flex: 1;
    display: flex;
    align-items: flex-start;
    padding-left: 464px;
    gap: 20px;
    background:
        radial-gradient(ellipse 160px 110px at 200px 500px, #cacaca, transparent),
        radial-gradient(ellipse 220px 300px at 430px 150px, #cacaca, transparent),
        radial-gradient(ellipse 240px 160px at 1480px 650px, #cfcfcf, transparent),
        radial-gradient(ellipse 300px 260px at 1700px 300px, #cfcfcf, transparent),
        #cdcdcd;
}

.sidebar {
    width: 172px;
}

.bars {
    height: 97px;
    padding: 0 10px;
    background: #f1f1f1;
    border-bottom-right-radius: 5px;
    overflow: hidden;
}

.bar-text {
    height: 16px;
    margin-top: 7px;
    display: flex;
    line-height: 16px;
}

.bar-text:first-child {
    margin-top: -8px;
}

.bar-text b {
    width: 48px;
    letter-spacing: -0.2px;
}

.bar-text i {
    margin-left: auto;
    font-style: normal;
    color: #999;
}

.bar {
    width: 152px;
    height: 9px;
    padding: 1px;
    display: flex;
    gap: 2px;
    border: 1px solid #c9c78c;
    border-radius: 5px;
    background: #fafafa;
}

.bar div {
    height: 5px;
    border-radius: 2px;
    background: linear-gradient(#c7bd3d, #a79c1f);
}

.happy div {
    width: 146px;
}

.life {
    border-color: #a9aee0;
}

.life div {
    width: 148px;
    background: linear-gradient(#6c74dc, #3b42b8);
}

.chain {
    margin-top: 2px;
    border-color: #b5b5b5;
    background: #ddd;
}

.chain div {
    width: 75px;
    background: linear-gradient(#7e7e7e, #666);
}

.chain div + div {
    width: 51px;
}

.bonus {
    position: relative;
    width: 33px;
    margin: -1px 0 0 15px;
}

.bonus span {
    position: absolute;
    inset: 0;
    font-size: 8px;
    line-height: 8px;
    text-align: center;
}

.notices {
    height: 35px;
    margin-top: 1px;
    display: flex;
    background: linear-gradient(#fff, #dcdcdc);
    border-radius: 0 5px 5px 0;
}

.notices div {
    width: 57px;
    display: flex;
    align-items: center;
    justify-content: center;
    border-right: 1px solid;
    border-image: linear-gradient(transparent, #c4c4c4, transparent) 1;
}

.notices .award {
    position: relative;
    width: 58px;
    border: 0;
    background: radial-gradient(circle at 50% 55%, #dfecb4, transparent 60%);
}

.award span {
    position: absolute;
    top: 4px;
    right: 9px;
    font-size: 9px;
    font-weight: bold;
    color: #7fa11f;
}

.dark-title {
    height: 22px;
    padding-left: 10px;
    border-radius: 0 5px 5px 0;
    background: repeating-linear-gradient(90deg, #232323 0, #232323 2px, #2e2e2e 2px, #2e2e2e 4px);
    color: #fff;
    font-size: 13px;
    font-weight: normal;
    line-height: 21px;
    letter-spacing: 0.95px;
}

ul {
    list-style: none;
}

li {
    height: 25px;
    padding: 0 10px 0 9px;
    display: flex;
    align-items: center;
    border-top: 1px solid #fff;
    border-bottom: 1px solid #c2c2c2;
    border-radius: 0 6px 6px 0;
    background: #f1f1f1;
}

li svg {
    fill: url(#gray);
    filter: drop-shadow(0 1px 0 #fff);
}

li span {
    width: 90px;
    margin-left: 19px;
    letter-spacing: 0.1px;
    white-space: nowrap;
}

li svg[width="19"] + span {
    margin-left: 16px;
}

li em {
    width: 14px;
    text-align: right;
    font-style: normal;
}

li.competitions {
    padding-left: 7px;
}

li.competitions span {
    margin-left: 17px;
}

li.highlight {
    background: #d6e1cc;
    border-bottom-color: #b9c4b0;
}

.arrow {
    margin-left: 8px;
    border: 5px solid transparent;
    border-left-color: #222;
    border-right: 0;
}

.arrow.dim {
    border-left-color: #999;
}

.server {
    margin: 12px 0 0 10px;
    padding-left: 10px;
    border-left: 1px solid #999;
    font-size: 10px;
    line-height: 10px;
    letter-spacing: 0.2px;
    white-space: nowrap;
}

.events {
    width: 784px;
    padding-top: 8px;
}

.events .dark-title {
    height: 30px;
    line-height: 31px;
    border-radius: 5px 5px 0 0;
}

.event {
    min-height: 35px;
    display: flex;
    border-bottom: 1px solid #c6c6c6;
    margin-right: 8px;
    background: #f1f1f1;
    line-height: 15px;
}

.event > div {
    display: flex;
    align-items: center;
    justify-content: center;
    border-right: 1px solid #c6c6c6;
    border-top: 1px solid #fff;
    box-shadow: inset 1px 0 #fff;
}

.event .text {
    width: 578px;
    padding: 8px 0 9px 7px;
    justify-content: flex-start;
    letter-spacing: 0.085px;
    white-space: nowrap;
}

.event .time {
    width: 76px;
    font-size: 10px;
    line-height: 12px;
    letter-spacing: 0.25px;
    color: #666;
    text-align: center;
}

.event .action {
    width: 30px;
    padding-bottom: 1px;
    fill: url(#gray);
}

.event .check {
    width: 32px;
    padding: 0 2px 1px 0;
    border-right: 0;
}

.check i {
    width: 13px;
    height: 13px;
    border: 2px solid #a8a8a8;
}

.event .tail {
    width: 8px;
    margin-right: -8px;
    margin-bottom: -1px;
    border: 0;
    border-radius: 0 0 5px 0;
    box-shadow: none;
    background: linear-gradient(#c6c6c6, #8f8f8f);
}

.scrollbar {
    width: 17px;
    display: flex;
    flex-direction: column;
    align-items: center;
    padding: 6px 0 5px;
    background: #f0f0f0;
    border-left: 1px solid #fff;
}

.thumb {
    width: 15px;
    height: 553px;
    margin: 229px 0 auto;
    background: #cdcdcd;
}

/* chat */

.chat-box {
    position: absolute;
    left: 1611px;
    top: 591px;
    width: 290px;
    height: 303px;
    display: flex;
    flex-direction: column;
    border: 1px solid #999;
    border-top: 0;
    border-radius: 6px;
    background: #f1f1f1;
    overflow: hidden;
    box-shadow: 0 0 3px rgba(0, 0, 0, 0.3);
}

.chat-head {
    height: 34px;
    flex: none;
    display: flex;
    align-items: center;
    padding: 2px 8px 0 13px;
    margin: 0 -1px;
    background: linear-gradient(#474747, #2b2b2b);
    color: #fff;
    font-weight: bold;
}

.chat-head i {
    width: 8px;
    height: 8px;
    border-radius: 50%;
    background: #8dae00;
    box-shadow: 0 0 4px #8dae00;
}

.chat-head span {
    margin-left: 13px;
    letter-spacing: -0.2px;
}

.chat-head u {
    width: 14px;
    height: 2px;
    margin: 7px 4px 0 auto;
    background: #777;
}

.chat-head s {
    color: #888;
    font-weight: normal;
    font-size: 14px;
    text-decoration: none;
}

.chat-body {
    height: 200px;
    flex: none;
    display: flex;
    border-bottom: 1px solid #bbb;
}

.messages {
    width: 272px;
    padding: 1px 0 0 10px;
    line-height: 18px;
    letter-spacing: 0.03px;
    white-space: nowrap;
}

.messages .me {
    color: #9550dd;
}

.messages .last {
    color: #666;
    letter-spacing: 0.1px;
}

.chat-scroll {
    width: 16px;
    display: flex;
    flex-direction: column;
    align-items: center;
    padding: 6px 1px 6px 0;
    border-left: 1px solid #fff;
}

.chat-scroll div {
    width: 15px;
    height: 20px;
    margin: auto 0 6px;
    background: #cdcdcd;
}

.chat-foot {
    flex: 1;
    display: flex;
    gap: 2px;
    padding: 4px 0 2px 3px;
}

.chat-input {
    width: 249px;
    border: 1px solid #bbb;
    border-radius: 5px;
}

.chat-side {
    flex: 1;
    margin: -3px 0 -2px;
}

.chat-side div {
    height: 50%;
    display: flex;
    align-items: center;
    justify-content: center;
}

.chat-side div + div {
    border-top: 1px solid #ccc;
}

.chat-tabs {
    position: absolute;
    left: 1394px;
    bottom: 0;
    display: flex;
    gap: 2px;
    height: 34px;
}

.chat-tab {
    width: 132px;
    display: flex;
    align-items: center;
    gap: 8px;
    padding-left: 8px;
    border-radius: 5px 5px 0 0;
    background: linear-gradient(#474747, #2b2b2b);
    color: #fff;
    fill: #858585;
    font-weight: bold;
    letter-spacing: -0.15px;
}

.chat-tool {
    width: 34px;
    display: flex;
    align-items: center;
    justify-content: center;
    border-radius: 5px 5px 0 0;
    background: linear-gradient(#00678b, #003040);
    fill: #82b3c3;
}

.status {
    position: absolute;
    left: 0;
    bottom: 0;
    width: 259px;
    height: 21px;
    padding: 1px 0 0 4px;
    border: 1px solid #e4e4e6;
    border-left: 0;
    background: #f9f9fb;
    color: #4a4a4f;
    line-height: 19px;
    letter-spacing: -0.22px;
    white-space: nowrap;
}

.tooltip {
    position: absolute;
    left: 127px;
    top: 5px;
    width: 264px;
    height: 38px;
    padding: 3px 6px;
    border: 1px solid #767676;
    background: #fff;
    color: #000;
    line-height: 16px;
    letter-spacing: -0.23px;
    white-space: nowrap;
}

/* windows taskbar */

.taskbar {
    height: 40px;
    flex: none;
    display: flex;
    background: linear-gradient(90deg, #191313 0, #0b0a0a 400px, #241c19 500px, #1c1614 700px, #0a0909 900px, #33251f 1120px, #3a2b25 1250px, #2a201d 1380px, #0b0909 1450px, #080808 1800px, #1b1715);
    color: #fff;
}

.start {
    width: 48px;
    display: flex;
    align-items: center;
    justify-content: center;
}

.search {
    width: 344px;
    display: flex;
    align-items: center;
    padding: 0 15px 0 9px;
    border-top: 1px solid #bbb;
    background: #f1f1f1;
    color: #333;
    font-size: 14.500px;
    letter-spacing: -0.3px;
}

.search span {
    margin: 0 auto 0 9px;
}

.app {
    width: 52px;
    display: flex;
    align-items: center;
    justify-content: center;
}

.app.running {
    width: 48px;
    background: #423f40;
    border-bottom: 2px solid #f7b5a5;
}

.tray {
    margin-left: auto;
    display: flex;
    align-items: center;
    padding-right: 25px;
}

.wifi {
    margin-left: 13px;
}

.sound {
    margin-left: 8px;
}

.clock {
    width: 70px;
    margin-right: 9px;
    line-height: 18px;
    text-align: center;
    letter-spacing: -0.4px;
}
```
